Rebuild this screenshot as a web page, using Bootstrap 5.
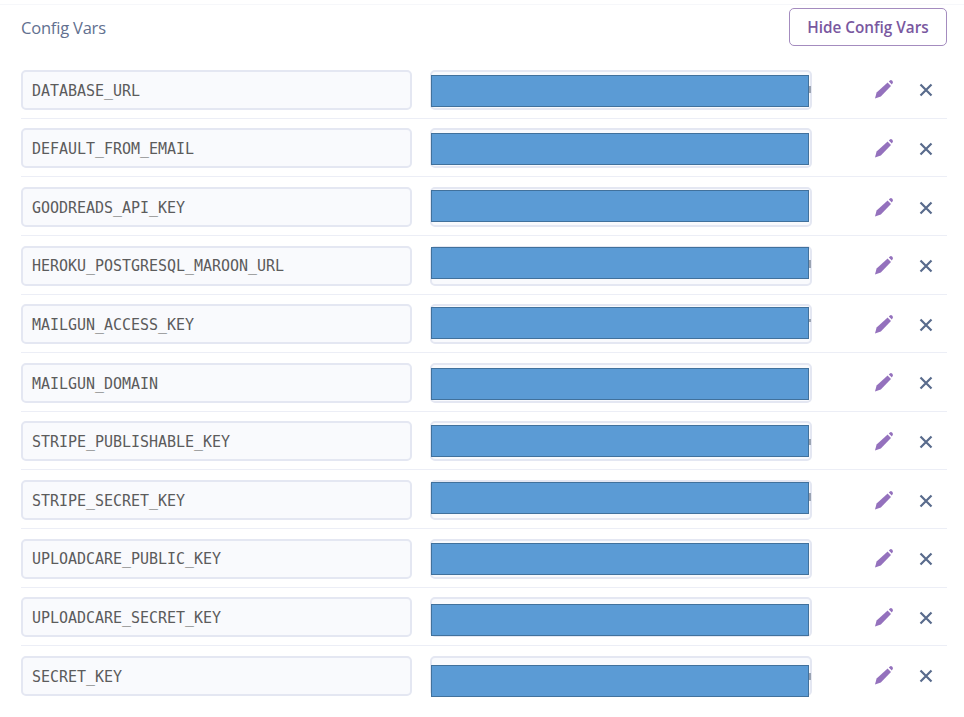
<!doctype html>
<html><head><meta charset="utf-8">
<link href="https://cdn.jsdelivr.net/npm/bootstrap@5.3.0/dist/css/bootstrap.min.css" rel="stylesheet">
<style>
body{background:#fff;font-family:"Open Sans","Noto Sans",sans-serif;overflow:hidden}
.cv-page{margin-top:4px;padding:3px 17px 0 21px;border-top:1px solid #f6f7fa}
.cv-title{font-size:16.5px;color:#62708f;letter-spacing:-.2px;padding-top:2px}
.cv-hide{font-size:15.3px;font-weight:600;color:#79589f;border:1px solid #a48cbf;border-radius:5px;height:38px;width:158px;padding:1px 0 0;background:#fff;line-height:1}
.cv-head{height:38px;margin-bottom:14.3px}
.cv-row{height:58.6px;border-bottom:1px solid #eceef6;padding-top:9.6px}
.cv-row:last-child{border-bottom:0}
.cv-input{height:40px;background:#f9fafd;border:2px solid #e4e7f2;border-radius:5px;font-family:"DejaVu Sans Mono","Liberation Mono",monospace;font-size:15px;color:#5c5c5c;padding:2px 9px 0;display:flex;align-items:center;letter-spacing:-.03px}
.cv-key{width:391px;margin-right:18px}
.cv-val{width:382px;position:relative}
.cv-mask{position:absolute;left:-1px;width:378px;height:32px;background:#5b9bd5;border:1px solid #41719c}
.cv-peek{position:absolute;left:377px;width:2px;background:#9aa3b2}
.cv-actions{width:135px;height:40px}
.cv-pencil{margin-left:62px;margin-top:-1px}
.cv-x{margin-left:25px;margin-top:1px}
</style></head><body>
<div class="cv-page">
<div class="d-flex justify-content-between align-items-center cv-head"><span class="cv-title">Config Vars</span><button class="btn cv-hide">Hide Config Vars</button></div>
<div id="rows"></div>
</div>
<script>
const keys=[["DATABASE_URL",5,[16,7]],["DEFAULT_FROM_EMAIL",4.4],["GOODREADS_API_KEY",2.8],["HEROKU_POSTGRESQL_MAROON_URL",1.2,[14,8]],["MAILGUN_ACCESS_KEY",2.6,[14.6,3]],["MAILGUN_DOMAIN",5],["STRIPE_PUBLISHABLE_KEY",3.4,[18,6]],["STRIPE_SECRET_KEY",1.8,[13,8]],["UPLOADCARE_PUBLIC_KEY",4.2],["UPLOADCARE_SECRET_KEY",6.6],["SECRET_KEY",9,[17,7]]];
document.getElementById('rows').innerHTML=keys.map(([k,o,p])=>`<div class="cv-row d-flex align-items-start"><div class="cv-input cv-key">${k}</div><div class="cv-input cv-val">${p?`<div class="cv-peek" style="top:${p[0]-2}px;height:${p[1]}px"></div>`:''}<div class="cv-mask" style="top:${o-2}px"></div></div><div class="cv-actions d-flex align-items-center"><svg class="cv-pencil" width="20" height="20" viewBox="0 0 20 20"><path d="M1 19.5 L2.6 13.5 L13.6 3.6 L17 7 L6.8 17.6 Z" fill="#9471bd"/><path d="M14.8 2.6 L15.9 1.4 Q17 .7 18.1 1.6 L18.6 2.2 Q19.4 3.2 18.6 4.2 L17.8 5.4 Z" fill="#9471bd"/></svg><svg class="cv-x" width="14" height="14" viewBox="0 0 14 14"><path d="M1.5 1.5 L12.5 12.5 M12.5 1.5 L1.5 12.5" stroke="#596b8c" stroke-width="2.2"/></svg></div></div>`).join('');
</script>
<script src="https://cdn.jsdelivr.net/npm/bootstrap@5.3.0/dist/js/bootstrap.bundle.min.js"></script>
</body></html>
